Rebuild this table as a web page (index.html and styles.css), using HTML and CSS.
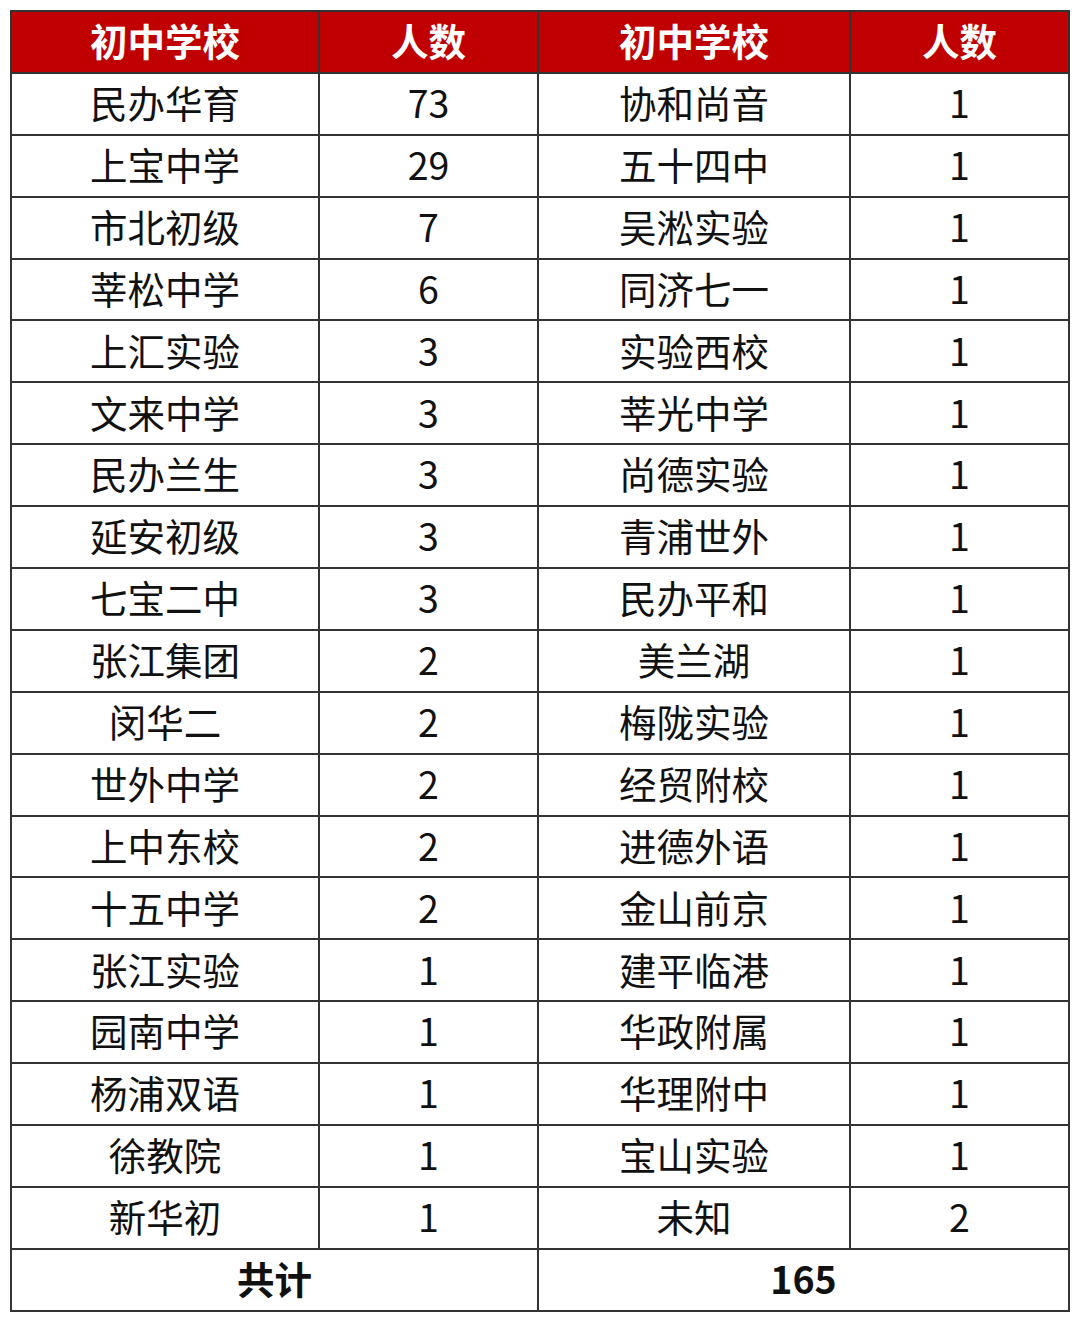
FILE: index.html
```html
<!DOCTYPE html>
<html lang="zh">
<head>
<meta charset="utf-8">
<link rel="stylesheet" href="styles.css">
</head>
<body>
<table class="t">
<colgroup><col class="c1"><col class="c2"><col class="c3"><col class="c4"></colgroup>
<thead>
<tr class="hd"><th>初中学校</th><th>人数</th><th>初中学校</th><th>人数</th></tr>
</thead>
<tbody>
<tr><td>民办华育</td><td>73</td><td>协和尚音</td><td>1</td></tr>
<tr><td>上宝中学</td><td>29</td><td>五十四中</td><td>1</td></tr>
<tr><td>市北初级</td><td>7</td><td>吴淞实验</td><td>1</td></tr>
<tr><td>莘松中学</td><td>6</td><td>同济七一</td><td>1</td></tr>
<tr><td>上汇实验</td><td>3</td><td>实验西校</td><td>1</td></tr>
<tr><td>文来中学</td><td>3</td><td>莘光中学</td><td>1</td></tr>
<tr><td>民办兰生</td><td>3</td><td>尚德实验</td><td>1</td></tr>
<tr><td>延安初级</td><td>3</td><td>青浦世外</td><td>1</td></tr>
<tr><td>七宝二中</td><td>3</td><td>民办平和</td><td>1</td></tr>
<tr><td>张江集团</td><td>2</td><td>美兰湖</td><td>1</td></tr>
<tr><td>闵华二</td><td>2</td><td>梅陇实验</td><td>1</td></tr>
<tr><td>世外中学</td><td>2</td><td>经贸附校</td><td>1</td></tr>
<tr><td>上中东校</td><td>2</td><td>进德外语</td><td>1</td></tr>
<tr><td>十五中学</td><td>2</td><td>金山前京</td><td>1</td></tr>
<tr><td>张江实验</td><td>1</td><td>建平临港</td><td>1</td></tr>
<tr><td>园南中学</td><td>1</td><td>华政附属</td><td>1</td></tr>
<tr><td>杨浦双语</td><td>1</td><td>华理附中</td><td>1</td></tr>
<tr><td>徐教院</td><td>1</td><td>宝山实验</td><td>1</td></tr>
<tr><td>新华初</td><td>1</td><td>未知</td><td>2</td></tr>
<tr class="tot"><td colspan="2">共计</td><td colspan="2">165</td></tr>
</tbody>
</table>
</body>
</html>
```
FILE: styles.css
```css
html, body {
  margin: 0;
  padding: 0;
  background: #ffffff;
}
body {
  padding: 10px 0 0 10px;
  font-family: "Noto Sans CJK SC", "Noto Sans", sans-serif;
}
.t {
  border-collapse: collapse;
  table-layout: fixed;
  width: 1058px;
  border: 2px solid #333333;
}
.c1 { width: 308px; }
.c2 { width: 219px; }
.c3 { width: 312px; }
.c4 { width: 219px; }
.t th, .t td {
  border: 2px solid #333333;
  height: 61.9px;
  padding: 0 0 4px 0;
  box-sizing: border-box;
  text-align: center;
  vertical-align: middle;
  font-size: 37.5px;
  line-height: 1;
  color: #111111;
  font-weight: 400;
}
.hd th {
  background: #c00000;
  color: #ffffff;
  font-weight: 700;
}
.tot td {
  font-weight: 700;
}
```
